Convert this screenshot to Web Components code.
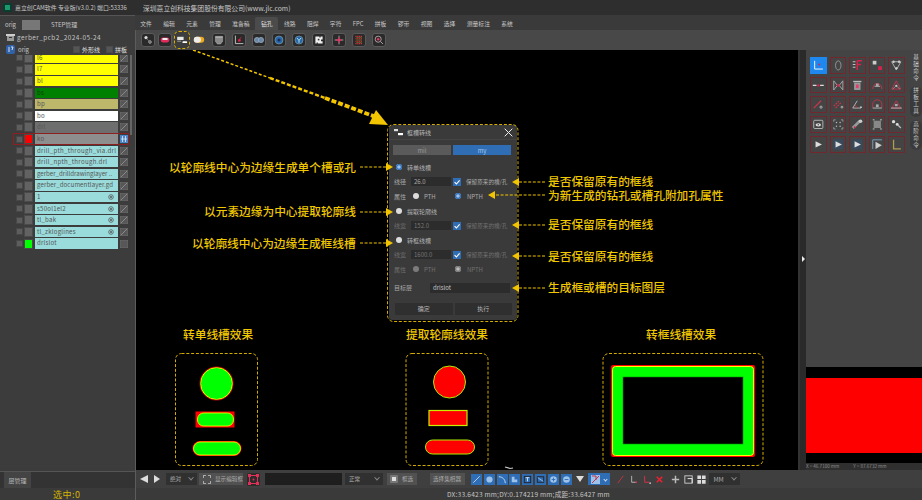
<!DOCTYPE html>
<html lang="zh">
<head>
<meta charset="utf-8">
<title>CAM</title>
<style>
    html, body { margin: 0; padding: 0; }
    body {
        width: 922px; height: 500px; overflow: hidden;
        display: flex; flex-direction: column;
        background: #3c3c3c; color: #cfcfcf;
        font-family: "Noto Sans CJK SC", "Noto Sans", sans-serif;
    }
    .main { flex: 1; display: flex; min-height: 0; }
    .center { flex: 1; display: flex; flex-direction: column; min-width: 0; }
    .work { flex: 1; display: flex; min-height: 0; }
</style>
</head>
<body>
<cam-titlebar></cam-titlebar>
<div class="main">
    <layer-panel>
        <layer-row name="l6" color="#ffff00" first></layer-row>
        <layer-row name="l7" color="#ffff00"></layer-row>
        <layer-row name="bl" color="#ffff00"></layer-row>
        <layer-row name="bs" color="#008000"></layer-row>
        <layer-row name="bp" color="#bdb76b"></layer-row>
        <layer-row name="bo" color="#ffffff"></layer-row>
        <layer-row name="drl" color="#6e6e6e"></layer-row>
        <layer-row name="ko" color="#8e8e8e" swatch="#ff0000" selected></layer-row>
        <layer-row name="drill_pth_through_via.drl" color="#9adcdc" track=".3"></layer-row>
        <layer-row name="drill_npth_through.drl" color="#9adcdc" track=".3"></layer-row>
        <layer-row name="gerber_drilldrawinglayer .." color="#9adcdc" track="0"></layer-row>
        <layer-row name="gerber_documentlayer.gd" color="#9adcdc" track=".1"></layer-row>
        <layer-row name="1" color="#9adcdc" eye></layer-row>
        <layer-row name="s50ol1el2" color="#9adcdc" eye></layer-row>
        <layer-row name="tl_bak" color="#9adcdc" eye></layer-row>
        <layer-row name="tl_zkloglines" color="#9adcdc" eye></layer-row>
        <layer-row name="drlslot" color="#9adcdc" swatch="#00ff00" plain></layer-row>
    </layer-panel>
    <div class="center">
        <menu-tabs></menu-tabs>
        <tool-bar></tool-bar>
        <div class="work">
            <cad-canvas></cad-canvas>
            <side-panel></side-panel>
        </div>
        <bottom-bar></bottom-bar>
    </div>
</div>
<status-bar></status-bar>

<script>
class CamTitlebar extends HTMLElement {
    constructor () {
        super ();
        this.attachShadow ({mode: 'open'});
    }
    connectedCallback () {
        this.shadowRoot.innerHTML = `
        <style>
            :host { display: flex; align-items: center; height: 15px; background: #2e2e2e; font-size: 5.9px; color: #c8c8c8; padding-left: 3px; white-space: nowrap; }
            svg { width: 9px; height: 9px; margin-right: 3px; flex: none; }
            .a { width: 128px; flex: none; }
            .b { font-size: 6.8px; }
        </style>
        <svg viewBox="0 0 9 9"><rect width="9" height="9" fill="#0c3b30"/><rect x="2" y="2" width="5" height="5" fill="#1a9a6c"/></svg>
        <span class="a">嘉立创CAM软件 专业版(v3.0.2) 端口:53336</span>
        <span class="b">深圳嘉立创科技集团股份有限公司(www.jlc.com)</span>`;
    }
}
customElements.define ("cam-titlebar", CamTitlebar);

class LayerPanel extends HTMLElement {
    constructor () {
        super ();
        this.attachShadow ({mode: 'open'});
    }
    connectedCallback () {
        this.shadowRoot.innerHTML = `
        <style>
            :host { display: flex; flex-direction: column; width: 135px; border-right: 1px solid #5c5c5c; background: #3c3c3c; font-size: 6px; color: #c4c4c4; white-space: nowrap; box-sizing: content-box; }
            .steps { display: flex; align-items: center; height: 16px; padding-top: 2px; padding-left: 5px; box-sizing: border-box; border-top: 1px solid #555; }
            .gray { width: 18px; height: 10px; background: #777; margin: 0 11px 0 6px; }
            .job { display: flex; align-items: center; height: 13px; padding-left: 6px; letter-spacing: .45px; font-size: 6.4px; }
            .job svg { width: 9px; height: 9px; margin-right: 2px; }
            .org { display: flex; align-items: center; height: 11px; padding-left: 6px; }
            .org svg { width: 9px; height: 9px; margin-right: 3px; }
            .chk { width: 5px; height: 5px; background: #555; border: 1px solid #4c4c4c; margin-right: 2px; }
            .org .first { margin-left: 44px; }
            .org .second { margin-left: 6px; }
            .w { color: #e0e0e0; }
            .list { flex: 1; min-height: 0; overflow: hidden; position: relative; border-bottom: 1px solid #555; }
            .scroll { position: absolute; right: 3px; top: 0; width: 2px; height: 80px; background: #666; }
            .tabs { display: flex; height: 16px; background: #333; }
            .tabs span { display: flex; align-items: center; justify-content: center; width: 27px; margin-left: 4px; background: #444; color: #bbb; }
        </style>
        <div class="steps"><span>orig</span><span class="gray"></span><span>STEP管理</span></div>
        <div class="job"><svg viewBox="0 0 9 9"><rect y="1" width="9" height="2" fill="#ccc"/><rect x="1" y="3" width="7" height="5" fill="#999"/><rect x="3" y="4" width="3" height="1" fill="#333"/></svg>gerber_pcb2_2024-05-24</div>
        <div class="org"><svg viewBox="0 0 9 9"><rect width="9" height="9" rx="2" fill="#2f62a8"/><path d="M3 2v5M5 2h2L6 5" stroke="#dde" fill="none"/></svg><span>orig</span>
            <span class="chk first"></span><span class="w">外形线</span><span class="chk second"></span><span class="w">拼板</span></div>
        <div class="list"><slot></slot><div class="scroll"></div></div>
        <div class="tabs"><span>层管理</span></div>`;
    }
}
customElements.define ("layer-panel", LayerPanel);

class LayerRow extends HTMLElement {
    constructor () {
        super ();
        this.attachShadow ({mode: 'open'});
    }
    connectedCallback () {
        const sel = this.hasAttribute ("selected");
        const color = this.getAttribute ("color");
        const swatch = this.getAttribute ("swatch") || "#626262";
        const track = this.getAttribute ("track") || ".22";
        const dark = color == "#008000" ? "#0b3d0b" : "#555";
        let icon = `<svg viewBox="0 0 8 8"><rect width="8" height="8" fill="#575757" stroke="#777" stroke-width=".6"/><path d="M1 7 7 1" stroke="#8a8a8a"/></svg>`;
        if (sel) icon = `<svg viewBox="0 0 8 8"><rect width="8" height="8" fill="#4a86c8"/><path d="M2.5 1v6M5.5 1v6M1 4h6" stroke="#dfe9f5" stroke-width=".8"/></svg>`;
        if (this.hasAttribute ("plain")) icon = `<svg viewBox="0 0 8 8"><rect width="8" height="8" fill="#575757" stroke="#777" stroke-width=".6"/></svg>`;
        const eye = this.hasAttribute ("eye") ? `<svg class="eye" viewBox="0 0 6 6"><circle cx="3" cy="3" r="2.3" fill="none" stroke="#555" stroke-width=".8"/><circle cx="3" cy="3" r="1" fill="#555"/></svg>` : "";
        this.shadowRoot.innerHTML = `
        <style>
            :host { display: flex; align-items: center; width: 115.5px; height: 11.62px; box-sizing: border-box; margin-left: 13px; ${this.hasAttribute ("first") ? "margin-top: -3px;" : ""} ${sel ? "outline: 1px solid #8c2020; outline-offset: -1px;" : ""} }
            .c { width: 5px; height: 5px; background: #5d5d5d; border: 1px solid #474747; margin: 0 1px 0 3px; flex: none; }
            .s { width: 9px; height: 10px; box-sizing: border-box; background: ${swatch}; border: 1px solid #4a4a4a; margin-right: 2px; flex: none; }
            .n { position: relative; width: 83px; height: 10.2px; line-height: 10px; background: ${color}; color: ${dark}; font-size: 6.1px; padding-left: 2px; box-sizing: border-box; overflow: hidden; letter-spacing: ${track}px; flex: none; }
            .eye { position: absolute; right: 4px; top: 2px; width: 6px; height: 6px; }
            .i { width: 8px; height: 8px; margin-left: 2px; flex: none; display: block; }
        </style>
        <span class="c"></span><span class="s"></span>
        <span class="n">${this.getAttribute ("name")}${eye}</span>
        <span class="i">${icon}</span>`;
    }
}
customElements.define ("layer-row", LayerRow);

class MenuTabs extends HTMLElement {
    constructor () {
        super ();
        this.attachShadow ({mode: 'open'});
    }
    connectedCallback () {
        const names = ["文件", "编辑", "元素", "管理", "准备稿", "钻孔", "线路", "阻焊", "字符", "FPC", "拼板", "锣带", "视图", "选择", "测量标注", "系统"];
        const items = names.map (n => `<span class="${n == "钻孔" ? "on" : ""}">${n}</span>`).join ("");
        this.shadowRoot.innerHTML = `
        <style>
            :host { display: flex; height: 15px; align-items: flex-end; margin-left: -1.5px; background: #3a3a3a; font-size: 5.8px; color: #c8c8c8; white-space: nowrap; }
            span { display: flex; align-items: center; justify-content: center; height: 13px; padding: 0 5.7px; }
            span.on { background: #4b4b4b; border-radius: 2px 2px 0 0; color: #e0e0e0; }
        </style>${items}`;
    }
}
customElements.define ("menu-tabs", MenuTabs);

const TOOL_ICONS = [
    `<circle cx="5" cy="4.5" r="2" fill="#ddd"/><circle cx="10" cy="10" r="1.6" fill="none" stroke="#ccc"/><path d="M6 6l3 3" stroke="#777"/>`,
    `<rect x="2" y="4.5" width="11" height="6" rx="3" fill="#e02c5c"/><rect x="4" y="5" width="7" height="2.4" rx="1.2" fill="#eee"/>`,
    `<rect x="1.5" y="3.5" width="8" height="4" fill="#e8e8e8"/><rect x="8" y="9" width="6" height="2.4" rx="1.2" fill="#fff"/><path d="M1.5 9h5" stroke="#bbb"/>`,
    `<rect x="1" y="3.5" width="13" height="7.5" rx="3.7" fill="#f0a818"/><rect x="1" y="3.5" width="9" height="7.5" rx="3.7" fill="#ededed"/>`,
    `<path d="M3 3h9v6l-2.5 3.5h-4L3 9z" fill="#8a8a8a" stroke="#bbb" stroke-width=".6"/><rect x="3" y="3" width="9" height="2" fill="#aaa"/>`,
    `<path d="M3 2v10h10" fill="none" stroke="#ddd"/><circle cx="8" cy="8" r="1.7" fill="#e0204c"/><path d="M10 4l-2 3" stroke="#e0204c"/>`,
    `<circle cx="5" cy="7.5" r="3.2" fill="#6b87a8" stroke="#9ab"/><circle cx="10" cy="7.5" r="3.2" fill="#6b87a8" stroke="#9ab"/>`,
    `<circle cx="7.5" cy="7.5" r="5" fill="#2a66ac" stroke="#8aa" stroke-width=".7"/><circle cx="7.5" cy="7.5" r="2" fill="#143252"/>`,
    `<circle cx="7.5" cy="7.5" r="5" fill="#2a66ac" stroke="#8aa" stroke-width=".7"/><path d="M5 5l2.5 3L10 5M7.5 8v3" stroke="#cfe" fill="none"/>`,
    `<path d="M3 3h5v1.5h1.5V3H12v4h-2v2h2v3H6v-1.5H4.5V12H3z" fill="#f0f0f0"/><rect x="6" y="6" width="2" height="2" fill="#333"/>`,
    `<path d="M7.5 2v11M2 7.5h11" stroke="#ddd" stroke-width=".8"/><path d="M4 7.5h7" stroke="#f02860" stroke-width="1.6"/><path d="M7.5 4v7" stroke="#f02860" stroke-width="1.2"/>`,
    `<path d="M3 3h9M3 6h9M3 9h9M3 12h9" stroke="#d8323c" stroke-width="1.4" stroke-dasharray="1.4 .9"/><path d="M4.6 4.5h6M4.6 7.5h6M4.6 10.5h6" stroke="#dab020" stroke-dasharray="1 1.4"/>`,
    `<circle cx="6.5" cy="6.5" r="3.8" fill="#3a2228" stroke="#ccc" stroke-width=".9"/><circle cx="6.5" cy="6.5" r="1.5" fill="#e0406a"/><path d="M9.5 9.5l3 3" stroke="#aaa" stroke-width="1.2"/>`
];

class ToolBar extends HTMLElement {
    constructor () {
        super ();
        this.attachShadow ({mode: 'open'});
    }
    connectedCallback () {
        const gaps = [0, 3, 2, 2, 6, 6, 6, 6, 6, 6, 6, 6, 6];
        const items = TOOL_ICONS.map ((svg, i) => {
            const cls = i == 2 ? "t mark" : (i == 3 ? "t flat" : "t");
            return `<span class="${cls}" style="margin-left:${gaps[i]}px"><svg viewBox="0 0 15 15">${svg}</svg></span>`;
        }).join ("");
        this.shadowRoot.innerHTML = `
        <style>
            :host { display: flex; align-items: center; height: 20px; background: #484848; padding-left: 5px; box-sizing: border-box; }
            .t { display: block; width: 14px; height: 14px; background: #2a2a2a; border: 1px solid #5a5a5a; border-radius: 3px; box-sizing: border-box; }
            .t svg { display: block; width: 100%; height: 100%; }
            .flat { background: none; border-color: transparent; }
            .mark { background: #3d3d3d; border: 1px dashed #d9b000; border-radius: 5px; width: 16px; height: 18px; padding: 2px 0; }
        </style>${items}`;
    }
}
customElements.define ("tool-bar", ToolBar);

class CadNote extends HTMLElement {
    constructor () {
        super ();
        this.attachShadow ({mode: 'open'});
    }
    connectedCallback () {
        const x = this.getAttribute ("x") - 136;
        const y = this.getAttribute ("y") - 50;
        this.shadowRoot.innerHTML = `
        <style>
            :host { position: absolute; left: ${x}px; top: ${y}px; transform: translateY(-50%); font-size: 11.7px; line-height: 1; color: #f0c800; white-space: nowrap; font-weight: 500; }
        </style><slot></slot>`;
    }
}
customElements.define ("cad-note", CadNote);

class SlotDialog extends HTMLElement {
    constructor () {
        super ();
        this.attachShadow ({mode: 'open'});
    }
    connectedCallback () {
        const radio = (on, dim) => `<span class="radio ${on ? "on" : ""} ${dim ? "dim" : ""}"></span>`;
        const width = (label, value, dim) => `
            <div class="row ${dim ? "dim" : ""}"><span class="lab">${label}</span><span class="inp">${value}</span>
            <span class="chk"><svg viewBox="0 0 8 8"><path d="M1.6 4.2 3.4 6 6.6 2.4" fill="none" stroke="#fff" stroke-width="1.1"/></svg></span><span class="keep">保留原来的槽/孔</span></div>`;
        const attr = (dim) => `
            <div class="row ${dim ? "dim" : ""}"><span class="lab">属性</span><span class="g1">${radio (false, dim)}<span>PTH</span></span><span class="g2">${radio (true, dim)}<span>NPTH</span></span></div>`;
        this.shadowRoot.innerHTML = `
        <style>
            :host { position: absolute; left: 253px; top: 75px; width: 128px; height: 195px; box-sizing: border-box; background: #3a3a3a; border-radius: 3px; padding: 0 5px; font-size: 6px; color: #aaa; display: flex; flex-direction: column; white-space: nowrap; }
            .title { display: flex; align-items: center; height: 15px; margin: 0 -5px; padding: 0 5px; border-bottom: 1px solid #444; box-sizing: border-box; color: #bbb; }
            .title svg { width: 9px; height: 7px; margin-right: 4px; }
            .x { margin-left: auto; }
            .title svg.x { width: 9px; height: 9px; margin-right: -1px; }
            .mode { display: flex; gap: 2px; height: 10px; margin: 5px 1px 5px -1px; }
            .mode span { flex: 1; display: flex; align-items: center; justify-content: center; background: #5a5a5a; color: #999; }
            .mode .on { background: #2f6db5; color: #a9c7ea; }
            .row { display: flex; align-items: center; height: 14.6px; }
            .pick { padding-left: 2px; color: #b4b4b4; }
            .radio { display: inline-block; width: 6px; height: 6px; border-radius: 50%; background: #dcdcdc; flex: none; }
            .radio.on { background: #2f6db5; box-shadow: inset 0 0 0 1.2px #2f6db5, inset 0 0 0 3px #9fc2ea; }
            .radio.dim { background: #7c7c7c; }
            .radio.on.dim { background: #777; box-shadow: inset 0 0 0 1.2px #777, inset 0 0 0 3px #bbb; }
            .pick .radio { margin-right: 5px; }
            .lab { width: 17px; }
            .inp { width: 40px; height: 9px; line-height: 9px; background: #2c2c2c; padding-left: 3px; box-sizing: border-box; color: #aaa; }
            .chk { display: block; width: 8px; height: 8px; background: #2f6db5; margin: 0 5px 0 2px; flex: none; }
            .chk svg { display: block; width: 8px; height: 8px; }
            .keep { font-size: 5.6px; }
            .g1 { display: flex; align-items: center; gap: 5px; margin-left: 2px; width: 42px; }
            .g2 { display: flex; align-items: center; gap: 6px; }
            .dim { color: #707070; }
            .dim .inp { color: #777; }
            .target { display: flex; align-items: center; height: 12px; margin-top: 5px; }
            .target .inp { width: 80px; height: 10px; line-height: 10px; margin-left: 18px; color: #c4c4c4; }
            .target .name { width: 18px; }
            .acts { display: flex; gap: 2px; height: 12px; margin-top: 9px; padding-left: 1px; }
            .acts span { flex: 1; display: flex; align-items: center; justify-content: center; background: #2f2f2f; color: #b4b4b4; }
        </style>
        <div class="title"><svg viewBox="0 0 9 7"><rect width="4" height="2.2" fill="#ddd"/><rect x="4" y="4" width="5" height="2.2" fill="#fff"/></svg><span>框槽转线</span>
            <svg class="x" viewBox="0 0 9 9"><path d="M.7.7l7.6 7.6M8.3.7.7 8.3" stroke="#eee" stroke-width="1"/></svg></div>
        <div class="mode"><span>mil</span><span class="on">my</span></div>
        <div class="row pick">${radio (true)}<span>转单线槽</span></div>
        ${width ("线径", "26.0")}
        ${attr (false)}
        <div class="row pick">${radio (false)}<span>提取轮廓线</span></div>
        ${width ("线宽", "152.0", true)}
        <div class="row pick">${radio (false)}<span>转框线槽</span></div>
        ${width ("线宽", "1600.0", true)}
        ${attr (true)}
        <div class="target"><span class="name">目标层</span><span class="inp">drlslot</span></div>
        <div class="acts"><span>确定</span><span>执行</span></div>`;
    }
}
customElements.define ("slot-dialog", SlotDialog);

class CadCanvas extends HTMLElement {
    constructor () {
        super ();
        this.attachShadow ({mode: 'open'});
    }
    connectedCallback () {
        const Y = "#f2c500";
        const toRight = (x1, x2, y) => `<path d="M${x1} ${y}H${x2 - 6}" stroke="${Y}" stroke-dasharray="3 1.6" fill="none"/><path d="M${x2} ${y}l-7-4v8z" fill="${Y}"/>`;
        const toLeft = (x1, x2, y) => `<path d="M${x1} ${y}H${x2 + 6}" stroke="${Y}" stroke-dasharray="3 1.6" fill="none"/><path d="M${x2} ${y}l7-4v8z" fill="${Y}"/>`;
        const frame = (x, y, w, h) => `<rect x="${x}" y="${y}" width="${w}" height="${h}" rx="6" fill="none" stroke="#d3ac00" stroke-width="1" stroke-dasharray="3 1.8"/>`;
        this.shadowRoot.innerHTML = `
        <style>
            :host { display: block; position: relative; flex: 1; min-width: 0; background: #000; overflow: hidden; }
            svg { position: absolute; left: 0; top: 0; width: 662px; height: 420px; z-index: 2; }
        </style>
        <slot-dialog></slot-dialog>
        <cad-note x="169" y="167">以轮廓线中心为边缘生成单个槽或孔</cad-note>
        <cad-note x="204" y="211">以元素边缘为中心提取轮廓线</cad-note>
        <cad-note x="192" y="243">以轮廓线中心为边缘生成框线槽</cad-note>
        <cad-note x="548" y="181">是否保留原有的框线</cad-note>
        <cad-note x="548" y="195">为新生成的钻孔或槽孔附加孔属性</cad-note>
        <cad-note x="548" y="224">是否保留原有的框线</cad-note>
        <cad-note x="548" y="256">是否保留原有的框线</cad-note>
        <cad-note x="548" y="287">生成框或槽的目标图层</cad-note>
        <cad-note x="183" y="334">转单线槽效果</cad-note>
        <cad-note x="406" y="334">提取轮廓线效果</cad-note>
        <cad-note x="646" y="334">转框线槽效果</cad-note>
        <svg viewBox="136 50 662 420">
            ${frame (387.5, 124.5, 130.5, 197)}
            <path d="M193 50 270 78" stroke="${Y}" stroke-width="1.5" stroke-dasharray="3 2"/>
            <path d="M270 78 325 98" stroke="${Y}" stroke-width="2.4" stroke-dasharray="4 2"/>
            <path d="M325 98 376 117" stroke="${Y}" stroke-width="3.8" stroke-dasharray="5 2"/>
            <path d="M388 125 369 124 376 110z" fill="${Y}"/>
            ${toRight (360, 393, 167)}
            ${toRight (360, 393, 212)}
            ${toRight (360, 393, 243)}
            ${toLeft (545, 512, 182)}
            ${toLeft (545, 488, 195)}
            ${toLeft (545, 512, 225)}
            ${toLeft (545, 512, 256)}
            ${toLeft (545, 512, 288)}
            ${frame (175.5, 353.5, 82, 112)}
            ${frame (406, 353.5, 82, 112)}
            ${frame (603, 353.5, 160, 112)}
            <circle cx="216.5" cy="383.5" r="16" fill="#00ff00" stroke="#ffff00" stroke-width="1"/>
            <circle cx="216.5" cy="383.5" r="16.6" fill="none" stroke="#ff0000" stroke-width=".7"/>
            <rect x="195.5" y="411.5" width="39" height="16" fill="#ff0000"/>
            <rect x="197.5" y="413" width="36" height="13" rx="6" fill="#00ff00" stroke="#ffff00" stroke-width=".8"/>
            <rect x="192.5" y="441" width="49" height="15" rx="7.5" fill="#ff0000"/>
            <rect x="193.5" y="442" width="47" height="13" rx="6.5" fill="#00ff00" stroke="#ffff00" stroke-width=".8"/>
            <circle cx="449.5" cy="382" r="16" fill="#ff0000" stroke="#a8f000" stroke-width="1"/>
            <rect x="429" y="410.5" width="38" height="15" fill="#ff0000" stroke="#c8f000" stroke-width="1.2"/>
            <rect x="425.5" y="440" width="49" height="14" rx="7" fill="#ff0000" stroke="#a8f000" stroke-width="1"/>
            <rect x="611" y="365" width="144" height="92" rx="2" fill="#ff0000"/>
            <rect x="612.5" y="366.5" width="141" height="89" rx="3" fill="#00ff00" stroke="#ffff00" stroke-width="1"/>
            <rect x="623" y="377" width="120" height="67" fill="#000" stroke="#0a8a0a" stroke-width=".6"/>
            <path d="M505 467l5 1.5 3-.5" stroke="#ccc" stroke-width="1.2" fill="none"/>
        </svg>`;
    }
}
customElements.define ("cad-canvas", CadCanvas);

const SIDE_ICONS = [
    `<path d="M4 3v9h9" fill="none" stroke="#fff"/><circle cx="9" cy="7" r="1" fill="#e0204c"/>`,
    `<path d="M8 3a3 5 0 1 1-.1 0" fill="none" stroke="#999"/>`,
    `<path d="M3 4h3M3 7h3M3 10h3" stroke="#ccc"/><path d="M8 3h5M8 3v10M8 7h4" stroke="#e0204c" stroke-width="1.6" fill="none"/>`,
    `<rect x="3" y="3" width="4" height="4" fill="#ccc"/><rect x="9" y="9" width="4" height="4" fill="#e0204c"/>`,
    `<path d="M3 4h10L8 13z" fill="none" stroke="#bbb"/><circle cx="5" cy="4" r="1.3" fill="#ccc"/><circle cx="11" cy="4" r="1.3" fill="#ccc"/><circle cx="8" cy="11" r="1.3" fill="#ccc"/>`,
    `<path d="M2 8h4M10 8h4" stroke="#ddd" stroke-width="1.3"/><circle cx="8" cy="8" r="1.3" fill="#e0204c"/>`,
    `<path d="M3 3v10l4-5zM13 3v10L9 8z" fill="none" stroke="#aaa"/><circle cx="8" cy="8" r="1.4" fill="#e0204c"/>`,
    `<rect x="4.5" y="5" width="7" height="8" fill="#999"/><rect x="3.5" y="3" width="9" height="1.5" fill="#bbb"/><rect x="6.5" y="7" width="3" height="4" fill="#e0406a"/>`,
    `<path d="M3 12a5 6 0 0 1 10 0" fill="none" stroke="#c8324c"/><path d="M5 9h6" stroke="#bbb"/><rect x="6.5" y="6" width="3" height="3" fill="#aaa"/>`,
    `<path d="M8 3 13 12H3z" fill="none" stroke="#c8324c"/><circle cx="8" cy="8.5" r="1.2" fill="#ccc"/><path d="M8 8.5 4 12M8 8.5 12 12" stroke="#bbb" stroke-width=".6"/>`,
    `<path d="M3 12 11 4" stroke="#d8324c" stroke-width="1.2"/><circle cx="11" cy="11" r="1.2" fill="none" stroke="#bbb"/>`,
    `<path d="M3 10 9 4M5 12l6-6" stroke="#d8324c" stroke-dasharray="2 1" stroke-width="1.2"/><circle cx="12" cy="11" r="1" fill="none" stroke="#bbb"/>`,
    `<path d="M3 12 8 4M3 12h9" fill="none" stroke="#bbb"/><path d="M7 12a4 4 0 0 0-1-3" fill="none" stroke="#d8324c"/><circle cx="12" cy="11" r="1" fill="#ccc"/>`,
    `<path d="M3 12V8a5 5 0 0 1 10 0v4" fill="none" stroke="#c8324c"/><rect x="6.5" y="8" width="3" height="3" fill="#aaa"/><path d="M3 12h10" stroke="#bbb"/>`,
    `<path d="M3 12 8 4 13 12z" fill="none" stroke="#c8324c"/><rect x="6.5" y="7.5" width="3" height="2.5" fill="#aaa"/><path d="M2 12h12" stroke="#bbb"/>`,
    `<rect x="3" y="3.5" width="10" height="9" rx="1" fill="none" stroke="#bbb"/><ellipse cx="8" cy="8.5" rx="3" ry="1.7" fill="#ddd"/><circle cx="8" cy="8.5" r=".8" fill="#444"/>`,
    `<path d="M3 5V3h2M13 5V3h-2M3 11v2h2M13 11v2h-2" fill="none" stroke="#999"/><circle cx="6" cy="6" r=".8" fill="#bbb"/><circle cx="10" cy="6" r=".8" fill="#bbb"/><circle cx="6" cy="10" r=".8" fill="#bbb"/><circle cx="10" cy="10" r=".8" fill="#bbb"/>`,
    `<path d="M3 12 11 4" stroke="#999" stroke-width="3"/><circle cx="11.5" cy="4.5" r="2" fill="#ccc"/><circle cx="5" cy="11" r="1" fill="#e0204c"/>`,
    `<rect x="4" y="4" width="8" height="8" fill="#888"/><path d="M3 3h2M11 3h2M3 13h2M11 13h2" stroke="#ccc"/>`,
    `<circle cx="5" cy="5" r="1.8" fill="#ddd"/><circle cx="9" cy="8" r="1.6" fill="#ddd"/><path d="M10 9l3 3" stroke="#bbb" stroke-width="1.4"/>`,
    `<path d="M5 4.5 12 8 5 11.5z" fill="#ddd"/>`,
    `<rect x="2.5" y="2.5" width="11" height="11" fill="#384a5c"/><path d="M5 4.5 12 8 5 11.5z" fill="#ddd"/>`,
    `<rect x="2.5" y="2.5" width="11" height="11" fill="#384a5c"/><path d="M5 4.5 12 8 5 11.5z" fill="#ddd"/>`,
    `<path d="M3 3h10M3 3v10" stroke="#7ea0c0"/><path d="M6 5 13 9 6 13z" fill="#ccc"/>`,
    `<path d="M5 3v10h8" fill="none" stroke="#b39b50" stroke-width="1.4"/>`
];

class SidePanel extends HTMLElement {
    constructor () {
        super ();
        this.attachShadow ({mode: 'open'});
    }
    connectedCallback () {
        const cells = SIDE_ICONS.map ((svg, i) => `<span class="${i == 0 ? "cell on" : "cell"}"><svg viewBox="0 0 16 16">${svg}</svg></span>`).join ("");
        this.shadowRoot.innerHTML = `
        <style>
            :host { display: flex; flex: none; width: 124px; background: #000; position: relative; }
            .strip { width: 8px; flex: none; background: #2a2a2a; border-left: 2px solid #333; box-sizing: border-box; display: flex; align-items: center; justify-content: center; padding-bottom: 2px; }
            .tri { width: 0; height: 0; border-left: 3px solid #eee; border-top: 3px solid transparent; border-bottom: 3px solid transparent; margin-left: 1px; }
            .right { flex: 1; display: flex; flex-direction: column; }
            .top { height: 317px; background: #444; display: flex; padding: 7px 0 0 4px; box-sizing: border-box; }
            .grid { display: grid; grid-template-columns: repeat(5, 16.6px); grid-auto-rows: 16.8px; column-gap: 3px; row-gap: 2.9px; width: 97px; align-content: start; }
            .cell { display: block; border: 1px solid #70272e; box-sizing: border-box; }
            .cell svg { display: block; width: 100%; height: 100%; }
            .on { background: #1e88ee; border-color: #1e88ee; }
            .tabs { margin: -4px 0 0 3px; width: 12px; height: 100px; display: flex; flex-direction: column; gap: 3px; font-size: 5.6px; color: #ccc; }
            .tabs span { writing-mode: vertical-rl; text-orientation: upright; background: #3a3a3a; border-radius: 6px; padding: 1px 0; width: 12px; display: flex; align-items: center; justify-content: center; line-height: 12px; letter-spacing: 1.5px; }
            .tabs span:first-child { background: none; }
            .red { height: 75px; margin-top: 11px; background: #ff0000; }
            .coord { margin-top: 10px; height: 7px; background: #2f2f2f; color: #8a8a8a; font-size: 4.6px; display: flex; gap: 14px; line-height: 7px; white-space: nowrap; }
        </style>
        <div class="strip"><span class="tri"></span></div>
        <div class="right">
            <div class="top">
                <div class="grid">${cells}</div>
                <div class="tabs"><span>基础命令</span><span>拼板工具</span><span>高阶命令</span></div>
            </div>
            <div class="red"></div>
            <div class="coord"><span>X = 46.7100 mm</span><span>Y = 87.6732 mm</span></div>
        </div>`;
    }
}
customElements.define ("side-panel", SidePanel);

class BottomBar extends HTMLElement {
    constructor () {
        super ();
        this.attachShadow ({mode: 'open'});
    }
    connectedCallback () {
        const blue = [
            `<path d="M2.5 9.5 9.5 2.5" stroke="#bcd6f2"/>`,
            `<circle cx="6" cy="6" r="3.4" fill="#9cc2ea"/>`,
            `<path d="M2 3c4 0 7 3 7 7" fill="none" stroke="#cfe2f6"/>`,
            `<path d="M3 3h3v3h3v3H3z" fill="#9cc2ea"/>`,
            `<rect x="2.5" y="2.5" width="7" height="7" fill="none" stroke="#222"/><path d="M4 4h4M6 4v4" stroke="#cfe2f6"/>`,
            `<rect x="2.5" y="3" width="7" height="6" fill="none" stroke="#222"/><path d="M3 4l6 4" stroke="#9cc2ea"/>`,
            `<circle cx="6" cy="6" r="3.6" fill="#9cc2ea"/><path d="M6 4v4M4 6h4" stroke="#2f6db5"/>`,
            `<circle cx="6" cy="6" r="3.6" fill="#9cc2ea"/><path d="M4 6h4" stroke="#2f6db5"/>`
        ].map (s => `<span class="b"><svg viewBox="0 0 12 12">${s}</svg></span>`).join ("");
        const reds = [
            `<path d="M3 10 9 2" stroke="#c8324c"/>`,
            `<path d="M4 2v7h5" fill="none" stroke="#bbb"/><circle cx="9" cy="9" r="1" fill="#c8324c"/>`,
            `<path d="M4 2v7h5" fill="none" stroke="#e0304c"/><circle cx="10" cy="10" r="1" fill="#bbb"/>`,
            `<path d="M3 3l6 6M9 3 3 9" stroke="#f02030" stroke-width="1.6"/>`,
            `<path d="M6 2v8M2 6h8" stroke="#bbb" stroke-width="1.6"/>`,
            `<rect x="2" y="2" width="8" height="8" fill="none" stroke="#ccc"/><path d="M5 5h5v5" stroke="#eee" fill="none"/>`,
            `<path d="M1.5 1.5h4v4h-4zM6.5 1.5h4v4h-4zM1.5 6.5h4v4h-4zM6.5 6.5h4v4h-4z" fill="#ddd"/>`
        ].map ((s, i) => `<span class="r" style="${i == 3 ? "margin-right:5px" : ""}"><svg viewBox="0 0 12 12">${s}</svg></span>`).join ("");
        this.shadowRoot.innerHTML = `
        <style>
            :host { display: flex; align-items: center; height: 18px; background: #3f3f3f; font-size: 5.6px; color: #aaa; padding-left: 4px; white-space: nowrap; }
            .tri-l { width: 0; height: 0; border-right: 8px solid #ddd; border-top: 4.5px solid transparent; border-bottom: 4.5px solid transparent; }
            .tri-r { width: 0; height: 0; border-left: 6px solid #ddd; border-top: 4.5px solid transparent; border-bottom: 4.5px solid transparent; margin-left: 6px; }
            .sel { display: flex; align-items: center; justify-content: space-between; height: 12px; background: #303030; padding: 0 4px; box-sizing: border-box; flex: none; }
            .sel i { width: 3px; height: 3px; border-right: 1px solid #888; border-bottom: 1px solid #888; transform: rotate(45deg) translate(-1px, -1px); }
            .grey { display: flex; align-items: center; height: 12px; background: #515151; box-sizing: border-box; color: #aaa; flex: none; }
            .frame { width: 7px; height: 7px; border: 1px dashed #aaa; margin: 0 4px; }
            .target { width: 13px; height: 13px; margin-left: 4px; background: #2c2c2c; border-radius: 2px; flex: none; }
            .target svg { display: block; }
            .field { width: 77px; height: 12px; background: #1e1e1e; margin-left: 5px; flex: none; }
            .b { display: block; width: 11px; height: 11px; background: #2f6db5; margin-right: 1.8px; flex: none; }
            .b svg, .r svg { display: block; width: 100%; height: 100%; }
            .r { display: block; width: 11px; height: 11px; margin-right: 2px; flex: none; }
            .filter { width: 0; height: 0; border-top: 6px solid #ddd; border-left: 4px solid transparent; border-right: 4px solid transparent; margin: 0 4px 0 3px; flex: none; }
            .plan { display: flex; align-items: center; justify-content: center; gap: 4px; width: 22px; height: 12px; background: #2f6db5; margin-right: 5px; flex: none; }
            .plan svg { width: 9px; height: 9px; }
            .plan i { width: 2px; height: 2px; border-right: 1px solid #cde; border-bottom: 1px solid #cde; transform: rotate(45deg); }
        </style>
        <span class="tri-l"></span><span class="tri-r"></span>
        <span class="sel" style="width:31px;margin-left:6px"><span>绝对</span><i></i></span>
        <span class="grey" style="width:44px;margin-left:2px"><span class="frame"></span>显示编辑框</span>
        <span class="target"><svg viewBox="0 0 13 13" width="13" height="13"><rect x="2.5" y="2.5" width="8" height="8" fill="none" stroke="#e03058"/><rect x="1" y="1" width="3" height="3" fill="#e03058"/><rect x="9" y="1" width="3" height="3" fill="#e03058"/><rect x="1" y="9" width="3" height="3" fill="#e03058"/><rect x="9" y="9" width="3" height="3" fill="#e03058"/><circle cx="6.5" cy="6.5" r="1" fill="#e03058"/></svg></span>
        <span class="field"></span>
        <span class="sel" style="width:38px;margin-left:3px"><span>正常</span><i></i></span>
        <span class="grey" style="width:30px;margin-left:4px;padding-left:3px"><svg viewBox="0 0 8 8" width="8" height="8"><rect width="8" height="8" rx="1" fill="#777"/><rect x="2" y="2" width="4" height="4" fill="#ddd"/></svg><span style="margin-left:4px">框选</span></span>
        <span class="grey" style="width:35px;margin-left:13px;padding-left:3px">选择集相器</span>
        <span style="width:6px;flex:none"></span>
        ${blue}
        <span class="filter"></span>
        <span class="plan"><svg viewBox="0 0 9 9"><rect width="9" height="9" fill="#9cc2ea"/><path d="M1 8 8 1M1 1h4v4" stroke="#c8324c" fill="none"/></svg><i></i></span>
        ${reds}
        <span class="sel" style="width:31px;font-size:6.4px"><span>MM</span><i></i></span>`;
    }
}
customElements.define ("bottom-bar", BottomBar);

class StatusBar extends HTMLElement {
    constructor () {
        super ();
        this.attachShadow ({mode: 'open'});
    }
    connectedCallback () {
        this.shadowRoot.innerHTML = `
        <style>
            :host { display: flex; align-items: center; height: 12px; flex: none; background: #3a3a3a; white-space: nowrap; }
            .l { width: 136px; height: 12px; display: flex; align-items: center; padding-left: 53px; box-sizing: border-box; border-right: 1px solid #5c5c5c; color: #d4b400; font-size: 9px; letter-spacing: .5px; }
            .r { padding-left: 311px; font-size: 6.6px; color: #c4c4c4; letter-spacing: .2px; }
        </style>
        <span class="l">选中:0</span><span class="r">DX:33.6423 mm;DY:0.174219 mm;成距:33.6427 mm</span>`;
    }
}
customElements.define ("status-bar", StatusBar);
</script>
</body>
</html>
